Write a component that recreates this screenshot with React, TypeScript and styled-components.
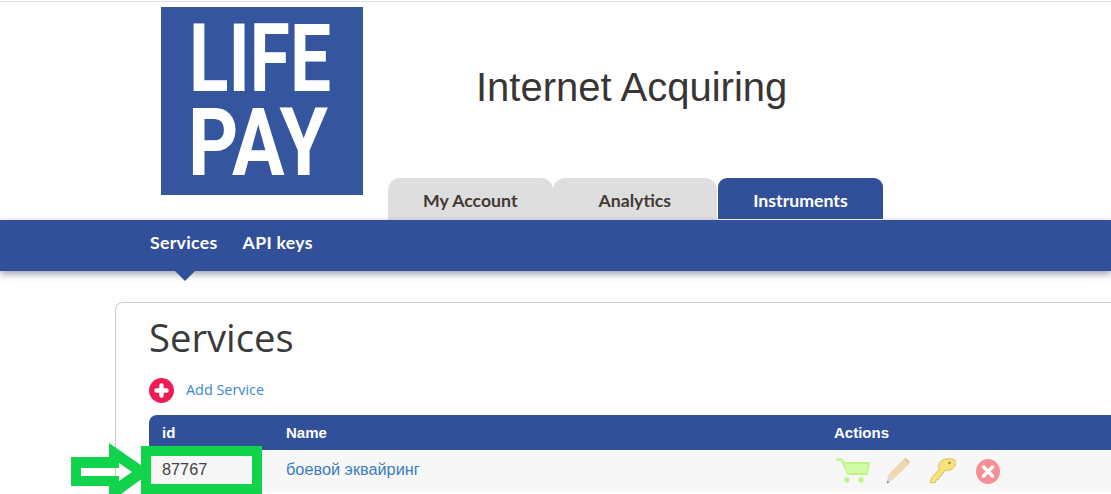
import React from "react";
import styled, { createGlobalStyle } from "styled-components";

const BLUE = "#32509a";

const Global = createGlobalStyle`
  html, body {
    margin: 0;
    padding: 0;
    background: #fff;
    overflow: hidden;
  }
  body {
    font-family: "Open Sans", "Liberation Sans", sans-serif;
  }
`;

const Page = styled.div`
  position: relative;
  width: 1111px;
  height: 493px;
  overflow: hidden;
  border-top: 1px solid #e2e2e2;
  margin-top: 1px;
  box-sizing: border-box;
`;

const Header = styled.header`
  display: flex;
  height: 218px;
  padding-left: 161px;
`;

const Logo = styled.svg`
  display: block;
  width: 202px;
  height: 188px;
  margin-top: 5px;
  flex: none;
  overflow: visible;
`;

const HeaderRight = styled.div`
  display: flex;
  flex-direction: column;
  margin-left: 25px;
`;

const Title = styled.h1`
  margin: 60px 0 0 88px;
  font: 400 40px/50px "Liberation Sans", Arial, sans-serif;
  color: #3a3535;
  white-space: nowrap;
`;

const Tabs = styled.nav`
  display: flex;
  margin-top: auto;
`;

const Tab = styled.a<{ $active?: boolean }>`
  width: ${(p) => (p.$active ? "165px" : "164.5px")};
  margin-left: ${(p) => (p.$active ? "1px" : "0")};
  height: ${(p) => (p.$active ? "41px" : "42px")};
  margin-bottom: ${(p) => (p.$active ? "1px" : "0")};
  box-sizing: border-box;
  padding-top: 12px;
  border-radius: ${(p) => (p.$active ? "9px 9px 0 0" : "12px 12px 0 0")};
  background: ${(p) => (p.$active ? BLUE : "#dedede")};
  color: ${(p) => (p.$active ? "#fff" : "#433a35")};
  font: 700 17.7px/22px "Lato", "Noto Sans", sans-serif;
  text-align: center;
`;

const NavBar = styled.div`
  position: relative;
  display: flex;
  align-items: flex-start;
  gap: 25px;
  height: 51px;
  padding: 12px 0 0 150px;
  box-sizing: border-box;
  background: ${BLUE};
  box-shadow: 0 3px 7px rgba(60, 65, 90, 0.5);
`;

const NavLink = styled.a<{ $current?: boolean }>`
  position: relative;
  color: #fff;
  font: 700 17.7px/22px "Lato", "Noto Sans", sans-serif;
  letter-spacing: 0.3px;

  ${(p) =>
    p.$current &&
    `
    &::after {
      content: "";
      position: absolute;
      left: 25px;
      top: 39px;
      border-left: 10px solid transparent;
      border-right: 10px solid transparent;
      border-top: 10px solid ${BLUE};
    }
  `}
`;

const Panel = styled.section`
  margin: 31px 0 0 115px;
  width: 1100px;
  padding: 0 0 0 33px;
  height: 230px;
  box-sizing: border-box;
  border: 1px solid #cccccc;
  border-bottom: 0;
  border-top-left-radius: 8px;
`;

const Heading = styled.h2`
  margin: 8px 0 0;
  font: 400 38.2px/52px "Open Sans", sans-serif;
  color: #3a3a3a;
`;

const AddRow = styled.div`
  display: flex;
  align-items: center;
  gap: 12px;
  margin-top: 15px;
  height: 25px;
`;

const AddLink = styled.a`
  color: #3a87d0;
  font: 400 14.4px/20px "Open Sans", sans-serif;
  margin-top: -2px;
`;

const Table = styled.div`
  margin-top: 12px;
`;

const Row = styled.div<{ $head?: boolean }>`
  display: grid;
  grid-template-columns: 124px 548px 1fr;
  align-items: center;
  height: ${(p) => (p.$head ? "35px" : "42px")};
  padding-left: 13px;
  background: ${(p) => (p.$head ? BLUE : "#f7f7f7")};
  color: ${(p) => (p.$head ? "#fff" : "#444")};
  border-top-left-radius: ${(p) => (p.$head ? "8px" : "0")};
  font: ${(p) => (p.$head ? 700 : 400)} ${(p) => (p.$head ? "15px" : "16.3px")}/20px "Liberation Sans", Arial, sans-serif;
`;

const NameLink = styled.a`
  color: #3a7cc0;
  margin-top: -4px;
`;

const IdCell = styled.span`
  margin-top: -4px;
`;

const Actions = styled.div`
  display: grid;
  grid-template-columns: 50px 44px 46px 24px;
  align-items: center;
  margin: 0 0 0 2px;

  svg {
    display: block;
  }
`;

const Callout = styled.div`
  position: absolute;
  left: 141px;
  top: 444px;
  width: 121px;
  height: 48px;
  box-sizing: border-box;
  border: 10px solid #11d44c;
`;

const CalloutArrow = styled.svg`
  position: absolute;
  left: 71px;
  top: 441px;
  display: block;
`;

function CartIcon() {
  return (
    <svg width="34" height="26" viewBox="0 0 34 26">
      <path d="M0 0.5h6.5l2 3.5H34l-2.4 13H11.5L5 2.5H0z" fill="#bff584" />
      <path d="M8.5 6H32l-1.6 9H11.5z" fill="#d3fca8" />
      <circle cx="11" cy="22" r="2.7" fill="#bff785" />
      <circle cx="25" cy="22" r="2.7" fill="#bff785" />
    </svg>
  );
}

function PencilIcon() {
  return (
    <svg width="26" height="26" viewBox="0 0 26 26">
      <path d="M18 1l5 5L7 21.5 2 17z" fill="#efd7b0" />
      <path d="M18 1l1.6-1 3.9 3.6-.5 2.4z" fill="#e2bc8f" />
      <path d="M2 17l5 4.5-6 3.5z" fill="#e0dacf" />
      <path d="M0.5 25.5l1-3 2 1.8z" fill="#8a8a8a" />
    </svg>
  );
}

function KeyIcon() {
  return (
    <svg width="26" height="26" viewBox="0 0 26 26">
      <path
        d="M12 2.500C16 0 23 0 25.500 3c1.500 3-1 7.500-5.500 9-2 .7-3.500 .6-5 .2L11 18l-2 1.200-.5 2.300-2.500 .6-.5 2.400-5 .5 1-5L9 11.500C8 7.500 9 4.500 12 2.500z"
        fill="#f8e27a"
        stroke="#cdb24a"
        strokeWidth="0.8"
      />
      <ellipse cx="19.500" cy="5" rx="1.600" ry="1.300" fill="#a99a5c" />
    </svg>
  );
}

function CloseIcon() {
  return (
    <svg width="24" height="25" viewBox="0 0 24 25">
      <ellipse cx="12" cy="12.500" rx="12" ry="12.500" fill="#f59095" />
      <path d="M7.500 8l9 9M16.500 8l-9 9" stroke="#fff" strokeWidth="3.400" strokeLinecap="round" />
    </svg>
  );
}

function AddIcon() {
  return (
    <svg width="25" height="25" viewBox="0 0 25 25">
      <circle cx="12.500" cy="12.500" r="12.500" fill="#ee1c56" />
      <path d="M12.500 7.500v10M7.500 12.500h10" stroke="#fff" strokeWidth="4.400" strokeLinecap="round" />
    </svg>
  );
}

export default function App() {
  return (
    <>
      <Global />
      <Page>
        <Header>
          <Logo viewBox="0 0 202 188">
            <rect width="202" height="188" fill="#35569f" />
            <text
              x="28"
              y="84"
              fontFamily="Roboto, sans-serif"
              fontWeight="700"
              fontSize="94"
              fill="#fff"
              textLength="142"
              lengthAdjust="spacingAndGlyphs"
            >
              LIFE
            </text>
            <text
              x="27"
              y="168"
              fontFamily="Roboto, sans-serif"
              fontWeight="700"
              fontSize="94"
              fill="#fff"
              textLength="140"
              lengthAdjust="spacingAndGlyphs"
            >
              PAY
            </text>
          </Logo>
          <HeaderRight>
            <Title>Internet Acquiring</Title>
            <Tabs>
              <Tab>My Account</Tab>
              <Tab>Analytics</Tab>
              <Tab $active>Instruments</Tab>
            </Tabs>
          </HeaderRight>
        </Header>
        <NavBar>
          <NavLink $current>Services</NavLink>
          <NavLink>API keys</NavLink>
        </NavBar>
        <Panel>
          <Heading>Services</Heading>
          <AddRow>
            <AddIcon />
            <AddLink>Add Service</AddLink>
          </AddRow>
          <Table>
            <Row $head>
              <span>id</span>
              <span>Name</span>
              <span>Actions</span>
            </Row>
            <Row>
              <IdCell>87767</IdCell>
              <NameLink>боевой эквайринг</NameLink>
              <Actions>
                <CartIcon />
                <PencilIcon />
                <KeyIcon />
                <CloseIcon />
              </Actions>
            </Row>
          </Table>
        </Panel>
        <CalloutArrow width="80" height="60" viewBox="0 0 80 60">
          <path
            fillRule="evenodd"
            d="M0 14h38V0l42 29-42 31V43H0z M10 25v8h38v5l13-9-13-9v5z"
            fill="#11d44c"
          />
        </CalloutArrow>
        <Callout />
      </Page>
    </>
  );
}
